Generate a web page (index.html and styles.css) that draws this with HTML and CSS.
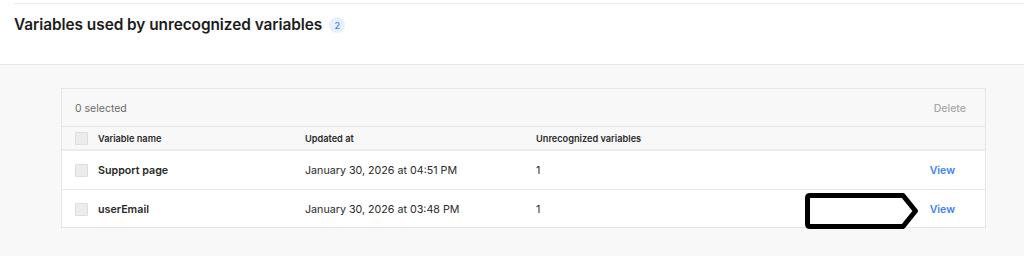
FILE: index.html
```html
<!DOCTYPE html>
<html>
<head>
<meta charset="utf-8">
<link rel="stylesheet" href="styles.css">
</head>
<body>
<div class="page">
  <header class="top">
    <div class="top-rule"></div>
    <div class="title-row">
      <h1 class="title">Variables used by unrecognized variables</h1>
      <span class="badge">2</span>
    </div>
  </header>
  <main class="content">
    <div class="card">
      <div class="toolbar">
        <span class="selected">0 selected</span>
        <span class="delete">Delete</span>
      </div>
      <div class="row head">
        <span class="check"></span>
        <span>Variable name</span>
        <span>Updated at</span>
        <span>Unrecognized variables</span>
        <span></span>
      </div>
      <div class="row">
        <span class="check"></span>
        <span class="name">Support page</span>
        <span>January 30, 2026 at 04:51 PM</span>
        <span class="num">1</span>
        <a class="view">View</a>
      </div>
      <div class="row last">
        <span class="check"></span>
        <span class="name">userEmail</span>
        <span>January 30, 2026 at 03:48 PM</span>
        <span class="num">1</span>
        <a class="view">View</a>
        <svg class="marker" width="116" height="38" viewBox="0 0 116 38">
          <path d="M6 3.5 H99 L111.5 19 L99 34.5 H6 Q3.5 34.5 3.5 32 V6 Q3.5 3.5 6 3.5 Z" fill="#fff" stroke="#000" stroke-width="5" stroke-linejoin="round"/>
        </svg>
      </div>
    </div>
  </main>
</div>
</body>
</html>
```
FILE: styles.css
```css
* { box-sizing: border-box; }
html, body { margin: 0; padding: 0; }
body {
  font-family: Inter, "Noto Sans", "Liberation Sans", sans-serif;
  color: #1f1f1f;
  background: #f8f8f8;
  width: 1024px;
  height: 256px;
  overflow: hidden;
}
.top {
  background: #fff;
  height: 65px;
  border-bottom: 1px solid #e6e6e6;
  padding-top: 3px;
}
.top-rule {
  margin-left: 14px;
  border-top: 1px solid #ececec;
}
.title-row {
  display: flex;
  align-items: center;
  gap: 7px;
  padding: 11px 0 0 14px;
}
.title {
  margin: 0;
  font-size: 15.4px;
  line-height: 20px;
  font-weight: 600;
  color: #1c1c1c;
  letter-spacing: -0.05px;
}
.badge {
  width: 16px;
  height: 16px;
  border-radius: 50%;
  background: #e7f1fe;
  color: #3b82f6;
  font-size: 9px;
  font-weight: 500;
  display: flex;
  align-items: center;
  justify-content: center;
}
.content {
  padding: 23px 38px 0 61px;
}
.card {
  border: 1px solid #e6e6e6;
  background: #f8f8f8;
}
.toolbar {
  height: 38px;
  display: flex;
  align-items: center;
  justify-content: space-between;
  padding: 1px 19px 0 13px;
  border-bottom: 1px solid #e6e6e6;
  font-size: 10.5px;
}
.selected { color: #6b6b6b; }
.delete { color: #a8a8a8; font-weight: 500; }
.row {
  position: relative;
  display: grid;
  grid-template-columns: 23px 207px 231px 1fr auto;
  align-items: center;
  height: 39px;
  padding: 1px 30px 0 13px;
  background: #fff;
  border-bottom: 1px solid #e6e6e6;
  font-size: 10.7px;
  color: #2a2a2a;
}
.row.last { border-bottom: none; height: 37px; }
.row.head {
  height: 24px;
  padding-top: 0;
  background: #f8f8f8;
  border-bottom: 2px solid #ececec;
  font-size: 9.2px;
  font-weight: 600;
  color: #2a2a2a;
}
.check {
  width: 13px;
  height: 13px;
  background: #ececec;
  border: 1px solid #dedede;
  border-radius: 1px;
}
.name { font-weight: 600; }
.num { font-weight: 400; }
.view {
  color: #3b82f6;
  font-weight: 600;
  font-size: 10.5px;
}
.marker {
  position: absolute;
  left: 742px;
  top: 2px;
}
```
